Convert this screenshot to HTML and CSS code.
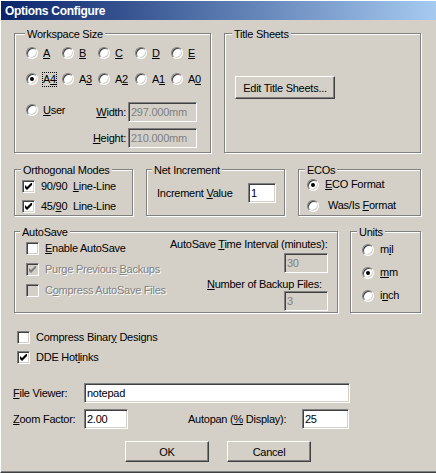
FILE: index.html
```html
<!DOCTYPE html>
<html>
<head>
  <meta charset="UTF-8">
  <title>Options Configure</title>
  <link rel="stylesheet" href="styles.css">
</head>
<body>
  <div class="dialog">
    <div class="titlebar">Options Configure</div>
    <div class="client">

      <div class="row row-top">
        <div class="group ws">
          <div class="caption">Workspace Size</div>
          <div class="sizes">
            <label class="opt"><span class="radio"></span><span><u>A</u></span></label>
            <label class="opt"><span class="radio"></span><span><u>B</u></span></label>
            <label class="opt"><span class="radio"></span><span><u>C</u></span></label>
            <label class="opt"><span class="radio"></span><span><u>D</u></span></label>
            <label class="opt"><span class="radio"></span><span><u>E</u></span></label>
            <label class="opt"><span class="radio on"></span><span class="focus">A<u>4</u></span></label>
            <label class="opt"><span class="radio"></span><span>A<u>3</u></span></label>
            <label class="opt"><span class="radio"></span><span>A<u>2</u></span></label>
            <label class="opt"><span class="radio"></span><span>A<u>1</u></span></label>
            <label class="opt"><span class="radio"></span><span>A<u>0</u></span></label>
          </div>
          <div class="user">
            <label class="opt"><span class="radio"></span><span><u>U</u>ser</span></label>
            <div class="dims">
              <label><u>W</u>idth:</label>
              <input class="field" type="text" value="297.000mm" disabled>
              <label><u>H</u>eight:</label>
              <input class="field" type="text" value="210.000mm" disabled>
            </div>
          </div>
        </div>

        <div class="group ts">
          <div class="caption">Title Sheets</div>
          <button class="btn">Edit Title Sheets...</button>
        </div>
      </div>

      <div class="row row-mid">
        <div class="group ortho">
          <div class="caption">Orthogonal Modes</div>
          <div class="list">
            <label class="opt"><span class="check"><svg viewBox="0 0 7 7"><polygon points="0,2 2,4 7,-1 7,2 2,7 0,5"/></svg></span><span>90/90&nbsp; <u>L</u>ine-Line</span></label>
            <label class="opt"><span class="check"><svg viewBox="0 0 7 7"><polygon points="0,2 2,4 7,-1 7,2 2,7 0,5"/></svg></span><span>45/<u>9</u>0&nbsp; Line-Line</span></label>
          </div>
        </div>

        <div class="group net">
          <div class="caption">Net Increment</div>
          <div class="inc">
            <label>Increment <u>V</u>alue</label>
            <input class="field" type="text" value="1">
          </div>
        </div>

        <div class="group eco">
          <div class="caption">ECOs</div>
          <div class="list">
            <label class="opt"><span class="radio on"></span><span><u>E</u>CO Format</span></label>
            <label class="opt"><span class="radio"></span><span class="pad">Was/Is <u>F</u>ormat</span></label>
          </div>
        </div>
      </div>

      <div class="row row-auto">
        <div class="group autosave">
          <div class="caption">AutoSave</div>
          <div class="as-body">
            <div class="list">
              <label class="opt"><span class="check blank"></span><span><u>E</u>nable AutoSave</span></label>
              <label class="opt dim"><span class="check off"><svg viewBox="0 0 7 7"><polygon points="0,2 2,4 7,-1 7,2 2,7 0,5"/></svg></span><span>Purge Previous <u>B</u>ackups</span></label>
              <label class="opt dim"><span class="check off blank"></span><span>C<u>o</u>mpress AutoSave Files</span></label>
            </div>
            <div class="as-right">
              <label class="lbl">AutoSave <u>T</u>ime Interval (minutes):</label>
              <input class="field interval" type="text" value="30" disabled>
              <label class="lbl backups"><u>N</u>umber of Backup Files:</label>
              <input class="field count" type="text" value="3" disabled>
            </div>
          </div>
        </div>

        <div class="group units">
          <div class="caption">Units</div>
          <div class="list">
            <label class="opt"><span class="radio"></span><span>m<u>i</u>l</span></label>
            <label class="opt"><span class="radio on"></span><span><u>m</u>m</span></label>
            <label class="opt"><span class="radio"></span><span>i<u>n</u>ch</span></label>
          </div>
        </div>
      </div>

      <div class="extra">
        <label class="opt"><span class="check blank"></span><span>Compress Binar<u>y</u> Designs</span></label>
        <label class="opt"><span class="check"><svg viewBox="0 0 7 7"><polygon points="0,2 2,4 7,-1 7,2 2,7 0,5"/></svg></span><span>DDE Hot<u>l</u>inks</span></label>
      </div>

      <div class="form">
        <div class="form-row">
          <label class="form-label"><u>F</u>ile Viewer:</label>
          <input class="field viewer" type="text" value="notepad">
        </div>
        <div class="form-row">
          <label class="form-label"><u>Z</u>oom Factor:</label>
          <input class="field zoom" type="text" value="2.00">
          <label class="autopan">Autopan (<u>%</u> Display):</label>
          <input class="field pan" type="text" value="25">
        </div>
      </div>

      <div class="actions">
        <button class="btn">OK</button>
        <button class="btn">Cancel</button>
      </div>

    </div>
  </div>
</body>
</html>
```

FILE: styles.css
```css
/* classic dialog look */
body {
  margin: 0;
  background: #d4d0c8;
  font-family: "Liberation Sans", Arial, sans-serif;
  font-size: 11px;
  letter-spacing: -0.25px;
  color: #000;
}

.dialog {
  width: 436px;
  height: 473px;
  box-sizing: border-box;
  overflow: hidden;
  border-top: 1px solid #fff;
  border-left: 1px solid #fff;
  border-bottom: 1px solid #404040;
  box-shadow: inset 0 -1px #808080;
}

.titlebar {
  height: 19px;
  box-sizing: border-box;
  padding: 2px 0 0 4px;
  line-height: 17px;
  font-size: 12px;
  font-weight: bold;
  letter-spacing: -0.3px;
  color: #fff;
  background: linear-gradient(to right, #0a246a, #a6caf0);
}

.client {
  padding: 13px 0 0 13px;
}

.row {
  display: flex;
  gap: 13px;
}

.row-top { height: 120px; }
.row-mid { height: 47px; margin-top: 16px; }
.row-auto { height: 82px; margin-top: 15px; gap: 12px; }

/* group boxes */
.group {
  box-sizing: border-box;
  border: 1px solid #808080;
  box-shadow: inset 1px 1px #fff, 1px 1px #fff;
}

.caption {
  width: max-content;
  margin-top: -6px;
  padding: 0 2px;
  line-height: 13px;
  background: #d4d0c8;
}

.opt {
  display: flex;
  align-items: center;
  gap: 6px;
  line-height: 13px;
}

/* controls */
.radio {
  width: 12px;
  height: 12px;
  flex-shrink: 0;
  box-sizing: border-box;
  border-radius: 50%;
  border: 1px solid;
  border-color: #808080 #fff #fff #808080;
  box-shadow: inset 1px 1px #404040, inset -1px -1px #d4d0c8;
  background: #fff;
}

.radio.on::after {
  content: "";
  display: block;
  width: 4px;
  height: 4px;
  margin: 3px;
  border-radius: 50%;
  background: #000;
}

.check {
  width: 13px;
  height: 13px;
  flex-shrink: 0;
  box-sizing: border-box;
  padding: 2px;
  border: 1px solid;
  border-color: #808080 #fff #fff #808080;
  box-shadow: inset 1px 1px #404040, inset -1px -1px #d4d0c8;
  background: #fff;
}

.check svg {
  display: block;
  width: 7px;
  height: 7px;
  fill: #000;
}

.check.off { background: #d4d0c8; }
.check.off svg { fill: #808080; }

.dim {
  color: #808080;
  text-shadow: 1px 1px #fff;
}

.field {
  box-sizing: border-box;
  height: 20px;
  margin: 0;
  padding: 0 0 0 2px;
  border: 1px solid;
  border-color: #808080 #fff #fff #808080;
  box-shadow: inset 1px 1px #404040, inset -1px -1px #d4d0c8;
  background: #fff;
  font: inherit;
  letter-spacing: inherit;
  color: #000;
  outline: none;
}

.field:disabled {
  background: #d4d0c8;
  color: #808080;
}

.btn {
  box-sizing: border-box;
  margin: 0;
  padding: 0;
  border: 1px solid;
  border-color: #fff #404040 #404040 #fff;
  box-shadow: inset -1px -1px #808080, inset 1px 1px #d4d0c8;
  background: #d4d0c8;
  font: inherit;
  letter-spacing: inherit;
  color: #000;
}

.focus {
  outline: 1px dotted #000;
}

/* workspace size */
.ws { width: 197px; }
.ws .caption { margin-left: 10px; }

.sizes {
  display: grid;
  grid-template-columns: 36px 36px 37px 36px 36px;
  grid-auto-rows: 24px;
  row-gap: 2px;
  margin-left: 11px;
}

.sizes .opt { gap: 5px; }

.user {
  display: flex;
  margin-top: 11px;
}

.user .opt {
  width: 62px;
  height: 14px;
  margin: 1px 0 0 11px;
  gap: 5px;
}

.dims {
  display: grid;
  grid-template-columns: 38px 69px;
  grid-auto-rows: 20px;
  column-gap: 2px;
  row-gap: 6px;
  align-items: center;
}

.dims label { text-align: right; }
.dims .field { width: 69px; }

/* title sheets */
.ts { width: 197px; }
.ts .caption { margin-left: 7px; }

.ts .btn {
  display: block;
  width: 100px;
  height: 23px;
  margin: 35px 0 0 10px;
}

/* orthogonal / net / eco */
.ortho { width: 119px; }
.ortho .caption { margin-left: 6px; }
.ortho .list { margin: -1px 0 0 7px; }
.ortho .opt { height: 20px; }

.net { width: 139px; }
.net .caption { margin-left: 5px; }

.inc {
  display: flex;
  align-items: center;
  height: 20px;
  margin: 6px 0 0 10px;
}

.inc label { width: 91px; }
.inc .field { width: 28px; }

.eco { width: 123px; }
.eco .caption { margin-left: 6px; }
.eco .list { margin: -3px 0 0 8px; }
.eco .opt { height: 21px; }
.pad { padding-left: 3px; }

/* autosave / units */
.autosave { width: 324px; }
.autosave .caption { margin-left: 5px; }

.as-body { display: flex; }

.as-body .list {
  width: 144px;
  margin: -1px 0 0 11px;
}

.as-body .opt { height: 21px; }

.as-right {
  display: flex;
  flex-direction: column;
  align-items: flex-start;
}

.lbl {
  line-height: 13px;
  margin-top: -1px;
}

.as-right .field { width: 44px; margin-left: 114px; }
.as-right .interval { margin-top: 2px; }
.as-right .backups { margin: 5px 0 0 37px; }

.units { width: 71px; }
.units .caption { margin-left: 6px; }
.units .list { margin: -1px 0 0 11px; }
.units .opt { height: 23px; }

/* bottom part */
.extra { margin: 14px 0 0 3px; }
.extra .opt { height: 20px; }

.form {
  display: flex;
  flex-direction: column;
  gap: 6px;
  margin: 16px 0 0 -1px;
}

.form-row {
  display: flex;
  align-items: center;
  height: 20px;
}

.form-label { width: 71px; }
.viewer { width: 266px; }
.zoom { width: 44px; }
.autopan { width: 114px; margin-left: 60px; }
.pan { width: 47px; }

.actions {
  display: flex;
  gap: 18px;
  margin: 12px 0 0 111px;
}

.actions .btn {
  width: 84px;
  height: 21px;
}
```
